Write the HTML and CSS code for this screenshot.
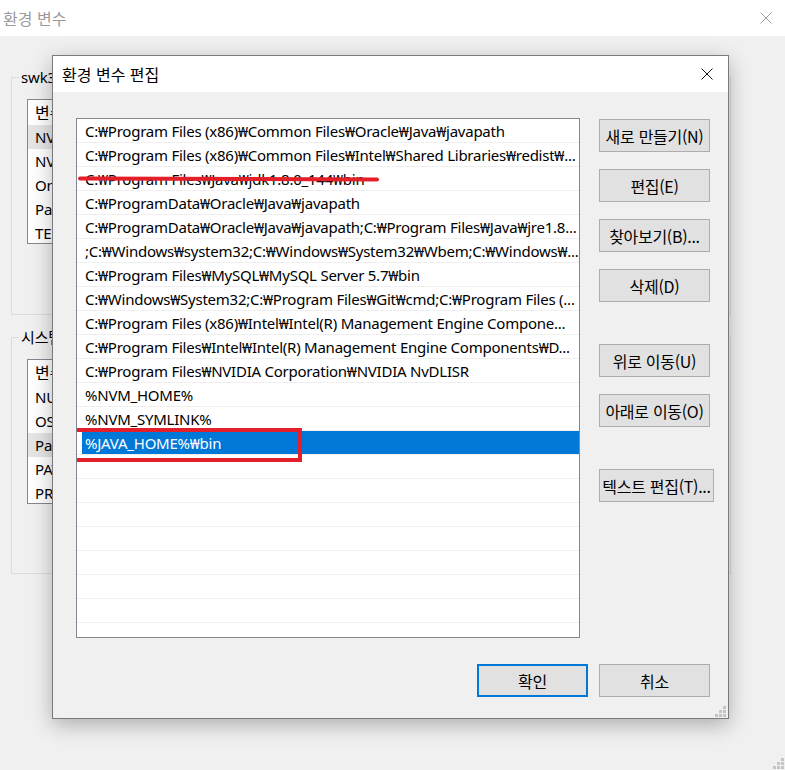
FILE: index.html
```html
<!DOCTYPE html>
<html lang="ko">
<head>
<meta charset="utf-8">
<title>환경 변수 편집</title>
<link rel="stylesheet" href="styles.css">
</head>
<body>
<div class="window">
  <div class="win-titlebar">
    <span class="win-title">환경 변수</span>
    <svg class="x-icon" width="12" height="12" viewBox="0 0 12 12"><path d="M0.5 0.5 L11.5 11.5 M11.5 0.5 L0.5 11.5" stroke="#a0a0a0" stroke-width="1" fill="none"/></svg>
  </div>
  <div class="win-content">
    <fieldset class="group g1">
      <legend>swk3의 사용자 변수(U)</legend>
      <div class="bglist">
        <div class="bgrow head">변수</div>
        <div class="bgrow hl">NVM_HOME</div>
        <div class="bgrow">NVM_SYMLINK</div>
        <div class="bgrow">OneDrive</div>
        <div class="bgrow">Path</div>
        <div class="bgrow">TEMP</div>
      </div>
    </fieldset>
    <fieldset class="group g2">
      <legend>시스템 변수(S)</legend>
      <div class="bglist">
        <div class="bgrow head">변수</div>
        <div class="bgrow">NUMBER_OF_PROCESSORS</div>
        <div class="bgrow">OS</div>
        <div class="bgrow hl">Path</div>
        <div class="bgrow">PATHEXT</div>
        <div class="bgrow">PROCESSOR_ARCHITECTURE</div>
      </div>
    </fieldset>
  </div>
  <svg class="grip main-grip" width="11" height="11" viewBox="0 0 11 11">
    <rect x="8" y="0" width="3" height="3" fill="#c4c4c4"/>
    <rect x="4" y="4" width="3" height="3" fill="#c4c4c4"/><rect x="8" y="4" width="3" height="3" fill="#c4c4c4"/>
    <rect x="0" y="8" width="3" height="3" fill="#c4c4c4"/><rect x="4" y="8" width="3" height="3" fill="#c4c4c4"/><rect x="8" y="8" width="3" height="3" fill="#c4c4c4"/>
  </svg>
</div>

<div class="dialog">
  <div class="dlg-titlebar">
    <span class="dlg-title">환경 변수 편집</span>
    <svg class="x-icon" width="12" height="12" viewBox="0 0 12 12"><path d="M0.5 0.5 L11.5 11.5 M11.5 0.5 L0.5 11.5" stroke="#111" stroke-width="1" fill="none"/></svg>
  </div>
  <div class="dlg-body">
    <div class="main-row">
      <div class="pathlist">
        <div class="row">C:₩Program Files (x86)₩Common Files₩Oracle₩Java₩javapath</div>
        <div class="row">C:₩Program Files (x86)₩Common Files₩Intel₩Shared Libraries₩redist₩...</div>
        <div class="row">C:₩Program Files₩Java₩jdk1.8.0_144₩bin</div>
        <div class="row">C:₩ProgramData₩Oracle₩Java₩javapath</div>
        <div class="row">C:₩ProgramData₩Oracle₩Java₩javapath;C:₩Program Files₩Java₩jre1.8...</div>
        <div class="row">;C:₩Windows₩system32;C:₩Windows₩System32₩Wbem;C:₩Windows₩...</div>
        <div class="row">C:₩Program Files₩MySQL₩MySQL Server 5.7₩bin</div>
        <div class="row">C:₩Windows₩System32;C:₩Program Files₩Git₩cmd;C:₩Program Files (...</div>
        <div class="row">C:₩Program Files (x86)₩Intel₩Intel(R) Management Engine Compone...</div>
        <div class="row">C:₩Program Files₩Intel₩Intel(R) Management Engine Components₩D...</div>
        <div class="row">C:₩Program Files₩NVIDIA Corporation₩NVIDIA NvDLISR</div>
        <div class="row">%NVM_HOME%</div>
        <div class="row">%NVM_SYMLINK%</div>
        <div class="row sel"><span class="selbg">%JAVA_HOME%₩bin</span></div>
        <div class="row"></div>
        <div class="row"></div>
        <div class="row"></div>
        <div class="row"></div>
        <div class="row"></div>
        <div class="row"></div>
        <div class="row"></div>
        <div class="row"></div>
        <svg class="strike" width="304" height="10" viewBox="0 0 304 10"><path d="M3 4.5 L300 5.5" stroke="#e3202a" stroke-width="4" stroke-linecap="round" fill="none"/></svg>
        <div class="redbox"></div>
      </div>
      <div class="btns">
        <div class="btn">새로 만들기(N)</div>
        <div class="btn">편집(E)</div>
        <div class="btn">찾아보기(B)...</div>
        <div class="btn">삭제(D)</div>
        <div class="btn gap-lg">위로 이동(U)</div>
        <div class="btn">아래로 이동(O)</div>
        <div class="btn gap-lg wide">텍스트 편집(T)...</div>
      </div>
    </div>
    <div class="footer">
      <div class="btn default">확인</div>
      <div class="btn">취소</div>
    </div>
    <svg class="grip dlg-grip" width="11" height="11" viewBox="0 0 11 11">
      <rect x="8" y="0" width="3" height="3" fill="#c4c4c4"/>
      <rect x="4" y="4" width="3" height="3" fill="#c4c4c4"/><rect x="8" y="4" width="3" height="3" fill="#c4c4c4"/>
      <rect x="0" y="8" width="3" height="3" fill="#c4c4c4"/><rect x="4" y="8" width="3" height="3" fill="#c4c4c4"/><rect x="8" y="8" width="3" height="3" fill="#c4c4c4"/>
    </svg>
  </div>
</div>
</body>
</html>
```
FILE: styles.css
```css
* { box-sizing: border-box; }
html, body { margin: 0; padding: 0; }
body {
  width: 785px;
  height: 770px;
  background: #f0f0f0;
  font-family: "Noto Sans", "Noto Sans CJK KR", sans-serif;
  font-size: 15px;
  color: #000;
  position: relative;
  overflow: hidden;
}
.window {
  height: 770px;
  display: flex;
  flex-direction: column;
  position: relative;
}
.win-titlebar {
  height: 36px;
  flex: none;
  background: #fff;
  display: flex;
  align-items: center;
  justify-content: space-between;
  padding: 0 13px 0 3px;
}
.win-title {
  color: #9a9a9a;
  font-family: "Noto Sans CJK KR", sans-serif;
  font-size: 16px;
}
.win-content {
  flex: 1;
  display: flex;
  flex-direction: column;
  padding: 31px 0 0 11px;
}
.group {
  margin: 0;
  width: 720px;
  border: 1px solid #dcdcdc;
  padding: 0 0 70px 7px;
  min-width: 0;
}
.group.g2 { margin-top: 12px; padding-bottom: 69px; }
.group legend {
  padding: 0 2px;
  line-height: 20px;
  height: 20px;
  font-family: "Noto Sans", "Noto Sans CJK KR", sans-serif;
  font-size: 15px;
  letter-spacing: -0.16px;
}
.bglist {
  margin: 12px 0 0 8px;
  width: 400px;
  height: 145px;
  border: 1px solid #828790;
  background: #fff;
  overflow: hidden;
}
.bgrow {
  height: 24px;
  line-height: 24px;
  padding-left: 7px;
  white-space: nowrap;
  letter-spacing: -0.16px;
}
.bgrow.head { height: 25px; line-height: 25px; font-family: "Noto Sans CJK KR", sans-serif; font-size: 16px; }
.bgrow.hl { background: #e5e5e5; }
.grip { position: absolute; }
.main-grip { right: 1px; bottom: 1px; }

.dialog {
  position: absolute;
  left: 52px;
  top: 55px;
  width: 677px;
  height: 664px;
  border: 1px solid #7a7a7a;
  background: #f0f0f0;
  box-shadow: 0 6px 20px rgba(0, 0, 0, 0.28);
  display: flex;
  flex-direction: column;
}
.dlg-titlebar {
  height: 36px;
  flex: none;
  background: #fff;
  display: flex;
  align-items: center;
  justify-content: space-between;
  padding: 0 15px 0 9px;
}
.dlg-title {
  font-family: "Noto Sans CJK KR", sans-serif;
  font-size: 16px;
}
.dlg-body {
  flex: 1;
  position: relative;
  display: flex;
  flex-direction: column;
  padding: 26px 14px 0 23px;
}
.main-row {
  display: flex;
  gap: 19px;
}
.pathlist {
  position: relative;
  flex: none;
  width: 504px;
  height: 520px;
  border: 1px solid #828790;
  background: #fff;
  overflow: hidden;
}
.row {
  height: 24px;
  border-bottom: 1px solid #efefef;
  padding: 1px 0 0 8px;
  line-height: 22px;
  white-space: nowrap;
  overflow: hidden;
  text-overflow: clip;
  font-size: 15px;
  letter-spacing: -0.24px;
  color: #000;
}
.row.sel { padding: 0 0 0 5px; }
.selbg {
  display: block;
  height: 24px;
  background: #0078d7;
  color: #fff;
  padding: 1px 0 0 3px;
  line-height: 22px;
}
.strike {
  position: absolute;
  left: 0;
  top: 55px;
}
.redbox {
  position: absolute;
  left: -7px;
  top: 309px;
  width: 232px;
  height: 34px;
  border: 4px solid #e3202a;
}
.btns {
  flex: none;
  display: flex;
  flex-direction: column;
  align-items: flex-start;
  padding-top: 1px;
}
.btn {
  flex: none;
  width: 111px;
  height: 33px;
  border: 1px solid #adadad;
  background: #e1e1e1;
  font-family: "Noto Sans CJK KR", sans-serif;
  font-size: 16px;
  letter-spacing: -0.3px;
  display: flex;
  align-items: center;
  justify-content: center;
  white-space: nowrap;
}
.btns .btn { margin-bottom: 17px; }
.btns .btn.gap-lg { margin-top: 25px; }
.btn.wide { width: 115px; }
.btn.default { border: 2px solid #0078d7; }
.footer {
  display: flex;
  justify-content: flex-end;
  gap: 11px;
  margin-top: 26px;
  padding-right: 4px;
}
.dlg-grip { right: 2px; bottom: 1px; }
```
